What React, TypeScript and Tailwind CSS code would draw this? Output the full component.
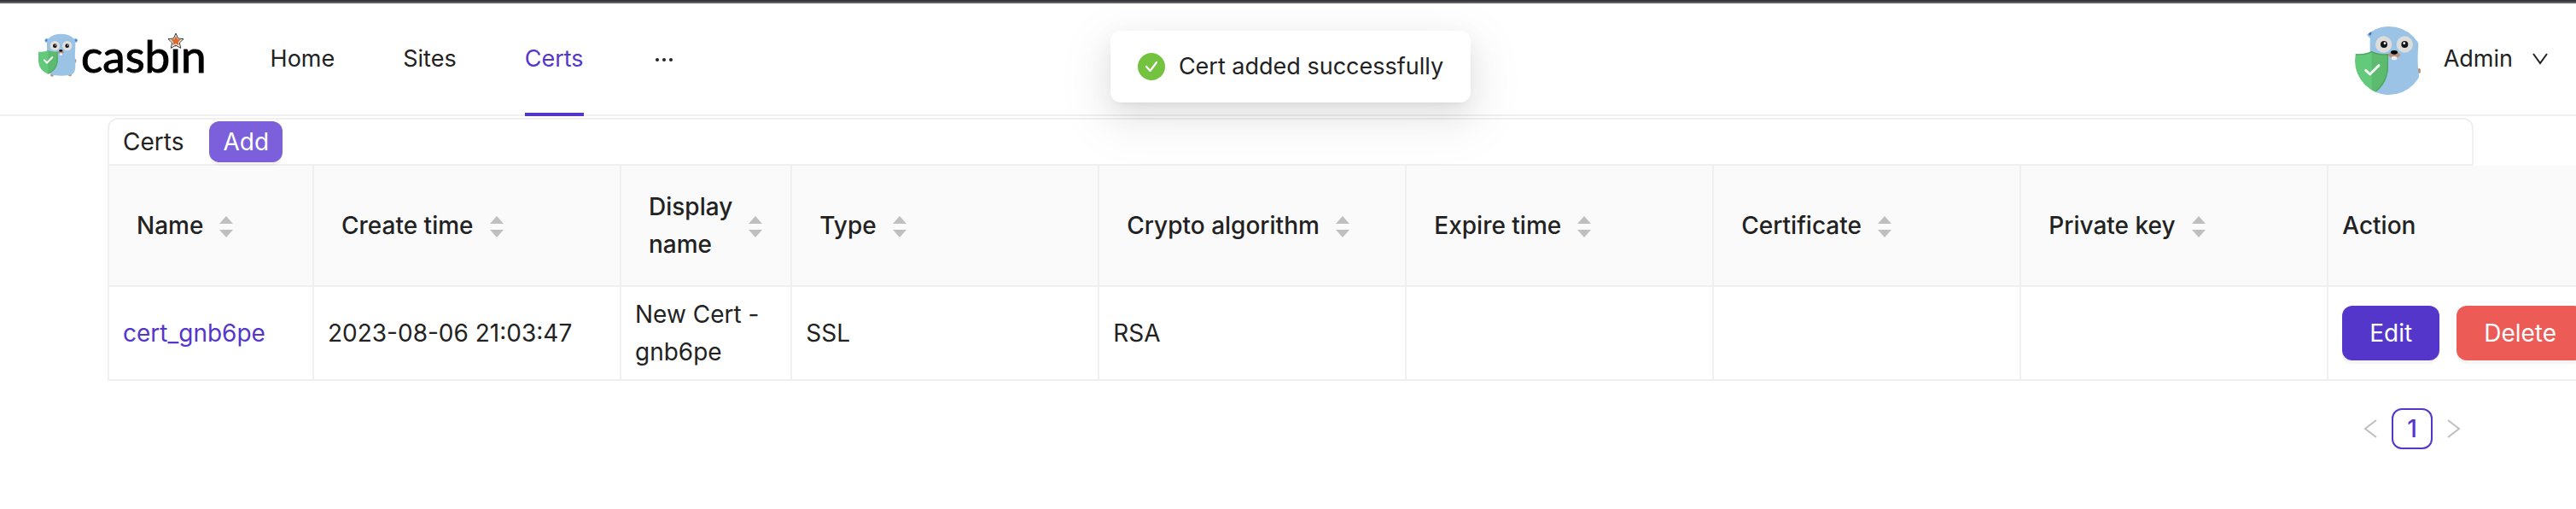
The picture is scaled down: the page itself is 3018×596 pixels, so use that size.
import React from "react";

const navItems = [
  { label: "Home", active: false },
  { label: "Sites", active: false },
  { label: "Certs", active: true },
];

const columns = [
  { title: "Name", width: "w-[240px]", sortable: true },
  { title: "Create time", width: "w-[360px]", sortable: true },
  { title: "Display name", width: "w-[200px]", sortable: true },
  { title: "Type", width: "w-[360px]", sortable: true },
  { title: "Crypto algorithm", width: "w-[360px]", sortable: true },
  { title: "Expire time", width: "w-[360px]", sortable: true },
  { title: "Certificate", width: "w-[360px]", sortable: true },
  { title: "Private key", width: "w-[360px]", sortable: true },
  { title: "Action", width: "w-[360px]", sortable: false },
];

const certs = [
  {
    name: "cert_gnb6pe",
    createdTime: "2023-08-06 21:03:47",
    displayName: "New Cert - gnb6pe",
    type: "SSL",
    cryptoAlgorithm: "RSA",
    expireTime: "",
    certificate: "",
    privateKey: "",
  },
];

function LogoGopher() {
  return (
    <svg viewBox="0 0 138 156" className="h-[52px] w-[46px]" aria-hidden="true">
      <ellipse cx="48" cy="147" rx="6" ry="5" fill="#b8917e" />
      <ellipse cx="111" cy="146" rx="6" ry="5" fill="#b8917e" />
      <ellipse cx="129" cy="97" rx="4" ry="7" fill="#b8917e" />
      <circle cx="30" cy="25" r="8" fill="#9ac3e6" />
      <circle cx="130" cy="25" r="8" fill="#9ac3e6" />
      <circle cx="28" cy="25" r="4" fill="#4a7fb5" />
      <circle cx="132" cy="25" r="4" fill="#4a7fb5" />
      <path
        d="M30 36C30 14 52 2 80 2s50 12 50 34c0 22-2 35-1 55 1 14 2 22 0 35-3 18-12 23-49 23-30 0-44-4-48-20-3-16-2-33-2-53z"
        fill="#9ac3e6"
      />
      <circle cx="58" cy="44" r="17" fill="#e2e0de" />
      <circle cx="101" cy="44" r="17" fill="#e2e0de" />
      <circle cx="58" cy="44" r="7" fill="#111" />
      <circle cx="101" cy="44" r="7" fill="#111" />
      <circle cx="60" cy="42" r="2" fill="#fff" />
      <circle cx="103" cy="42" r="2" fill="#fff" />
      <ellipse cx="79" cy="67" rx="11" ry="5" fill="#b8917e" />
      <rect x="74" y="70" width="10" height="7" rx="2" fill="#eee" />
      <ellipse cx="79" cy="61" rx="6" ry="4" fill="#111" />
      <path d="M0 65Q22 67 34 60Q46 67 68 65V98Q66 130 34 143Q2 130 0 98z" fill="#63ca7b" />
      <path d="M34 60Q46 67 68 65V98Q66 130 34 143z" fill="#5dbb6f" />
      <path d="M66 66V98Q64 129 34 141" fill="none" stroke="#4fa560" strokeWidth="3" />
      <path
        d="M21 94l9 10 19-20"
        fill="none"
        stroke="#fff"
        strokeWidth="6"
        strokeLinecap="round"
        strokeLinejoin="round"
      />
    </svg>
  );
}

function AvatarGopher() {
  return (
    <svg viewBox="27 21 240 240" className="mt-1 size-20 rounded-full" role="img" aria-label="Avatar">
      <path d="M66 48 Q72 40 90 34 L96 60 L80 62 Z" fill="#9ac3e6" />
      <path d="M74 48 Q80 40 86 42 L82 54 Z" fill="#4278b3" />
      <ellipse cx="252" cy="177" rx="6" ry="9" fill="#b8917e" />
      <path
        d="M80 75C80 35 110 5 165 5S252 50 250 90C247 125 247 150 250 180C256 215 255 270 220 270H110C70 270 78 200 80 170Z"
        fill="#9ac3e6"
      />
      <circle cx="128" cy="84" r="29" fill="#dcdcda" />
      <circle cx="202" cy="84" r="29" fill="#dcdcda" />
      <circle cx="129" cy="84" r="12" fill="#141414" />
      <circle cx="202" cy="84" r="12" fill="#141414" />
      <circle cx="132" cy="80" r="4" fill="#fff" />
      <circle cx="200" cy="80" r="4" fill="#fff" />
      <ellipse cx="165" cy="121" rx="21" ry="10" fill="#b8917e" />
      <rect x="155" y="126" width="20" height="13" rx="6" fill="#ececec" />
      <ellipse cx="165" cy="112" rx="12" ry="7" fill="#000" />
      <path d="M27 118Q64 121 86 109Q108 121 144 118V165Q141 218 104 248Q86 262 66 250Q30 218 27 165Z" fill="#63ca7b" />
      <path d="M86 109Q108 121 144 118V165Q141 218 104 248L86 258Z" fill="#5dbb6f" />
      <path d="M27 119Q64 122 86 110Q108 122 142 119V165Q139 217 102 247" fill="none" stroke="#4fa560" strokeWidth="4" />
      <path
        d="M65 175L80 189L111 158"
        fill="none"
        stroke="#f2f2f2"
        strokeWidth="9"
        strokeLinecap="round"
        strokeLinejoin="round"
      />
    </svg>
  );
}

function Star() {
  return (
    <svg viewBox="0 0 60 60" className="size-5" aria-hidden="true">
      <path
        d="M30 3L38 21L57 23L43 36L47 55L30 45L13 55L17 36L3 23L22 21Z"
        fill="#fff"
        stroke="#333"
        strokeWidth="3"
      />
      <path d="M30 12L36 24L48 25L39 34L41 46L30 40L19 46L21 34L12 25L24 24Z" fill="#e0692c" />
    </svg>
  );
}

function Logo() {
  return (
    <a href="#home" className="flex items-center gap-1 pb-2">
      <LogoGopher />
      <span className="relative font-['Lato',sans-serif] text-[53px] leading-[52px] text-black [-webkit-text-stroke:1px_#000]">
        casbin
        <span className="absolute -top-px left-[101px]">
          <Star />
        </span>
      </span>
    </a>
  );
}

function Chevron({ d, className }: { d: string; className: string }) {
  return (
    <svg viewBox="0 0 24 24" className={className} fill="none" stroke="currentColor" strokeWidth="2" aria-hidden="true">
      <path d={d} />
    </svg>
  );
}

function Header() {
  return (
    <header className="flex items-center justify-between border-b-2 border-[#f0f0f0] pr-[30px] pl-[45px]">
      <div className="flex items-center gap-[75px]">
        <Logo />
        <nav className="flex gap-20">
          {navItems.map((item) => (
            <a
              key={item.label}
              href={"#" + item.label.toLowerCase()}
              className={item.active ? "relative py-[43px] text-[#5436cb]" : "relative py-[43px]"}
            >
              {item.label}
              {item.active && <span className="absolute inset-x-0 -bottom-0.5 h-1 bg-[#5436cb]" />}
            </a>
          ))}
          <button type="button" aria-label="More" className="py-[43px]">
            <svg viewBox="0 0 28 28" className="size-7" fill="currentColor" aria-hidden="true">
              <circle cx="6" cy="15" r="2" />
              <circle cx="14" cy="15" r="2" />
              <circle cx="22" cy="15" r="2" />
            </svg>
          </button>
        </nav>
      </div>
      <button type="button" className="flex items-center gap-6">
        <AvatarGopher />
        <span className="flex items-center gap-5">
          Admin
          <Chevron d="M4 6L12 17L20 6" className="size-6" />
        </span>
      </button>
    </header>
  );
}

function Sorter() {
  return (
    <svg viewBox="0 0 18 30" className="mt-1 h-[30px] w-[18px] shrink-0" fill="#bfbfbf" aria-hidden="true">
      <path d="M9 2L17 11H1Z" />
      <path d="M1 18H17L9 27Z" />
    </svg>
  );
}

function CertTable() {
  return (
    <table className="w-max table-fixed border-separate border-spacing-0 border-l-2 border-[#f0f0f0] text-left">
      <thead className="bg-[#fafafa]">
        <tr>
          {columns.map((column) => (
            <th
              key={column.title}
              className={
                column.width + " border-r-2 border-b-2 border-[#f0f0f0] px-4 py-[26px] font-medium last:border-r-0"
              }
            >
              {column.sortable ? (
                <button type="button" className="flex items-center gap-[18px] px-4 text-left">
                  <span>{column.title}</span>
                  <Sorter />
                </button>
              ) : (
                column.title
              )}
            </th>
          ))}
        </tr>
      </thead>
      <tbody>
        {certs.map((cert) => (
          <tr
            key={cert.name}
            className="*:border-r-2 *:border-b-2 *:border-[#f0f0f0] *:px-4 *:py-[10px] *:last:border-r-0"
          >
            <td>
              <a href="#cert" className="text-[#5436cb]">
                {cert.name}
              </a>
            </td>
            <td>{cert.createdTime}</td>
            <td>{cert.displayName}</td>
            <td>{cert.type}</td>
            <td>{cert.cryptoAlgorithm}</td>
            <td>{cert.expireTime}</td>
            <td>{cert.certificate}</td>
            <td>{cert.privateKey}</td>
            <td>
              <div className="flex gap-5 text-white">
                <button
                  type="button"
                  className="rounded-xl bg-[#5436cb] px-8 py-[10px] shadow-[0_4px_0_rgba(0,0,0,0.04)]"
                >
                  Edit
                </button>
                <button
                  type="button"
                  className="rounded-xl bg-[#ec5b56] px-8 py-[10px] shadow-[0_4px_0_rgba(0,0,0,0.04)]"
                >
                  Delete
                </button>
              </div>
            </td>
          </tr>
        ))}
      </tbody>
    </table>
  );
}

function Pagination() {
  return (
    <nav aria-label="Pagination" className="mt-8 flex justify-end">
      <button type="button" aria-label="Previous page" disabled className="grid size-12 place-items-center text-[#bfbfbf]">
        <Chevron d="M18 2L5 12L18 22" className="size-6" />
      </button>
      <button
        type="button"
        aria-current="page"
        className="grid size-12 place-items-center rounded-xl border-2 border-[#5436cb] font-medium text-[#5436cb]"
      >
        1
      </button>
      <button type="button" aria-label="Next page" disabled className="grid size-12 place-items-center text-[#bfbfbf]">
        <Chevron d="M6 2L19 12L6 22" className="size-6" />
      </button>
    </nav>
  );
}

function Toast() {
  return (
    <div className="pointer-events-none absolute inset-x-0 top-[34px] flex justify-center pl-1.5">
      <div
        role="status"
        className="flex items-center gap-4 rounded-xl bg-white px-8 py-5 shadow-[0_12px_32px_0_rgba(0,0,0,0.08),0_6px_12px_-8px_rgba(0,0,0,0.12),0_18px_56px_16px_rgba(0,0,0,0.05)]"
      >
        <svg viewBox="0 0 32 32" className="size-8" aria-hidden="true">
          <circle cx="16" cy="16" r="16" fill="#73c240" />
          <path
            d="M10 16L14.500 21L22 11"
            fill="none"
            stroke="#fff"
            strokeWidth="2.200"
            strokeLinecap="round"
            strokeLinejoin="round"
          />
        </svg>
        <span>Cert added successfully</span>
      </div>
    </div>
  );
}

export default function App() {
  return (
    <div className="relative min-h-screen overflow-hidden border-t-2 border-[#36353b] bg-white font-['Inter',sans-serif] text-[27px] leading-[44px] text-[#222222]">
      <div className="border-t-2 border-[#616166]">
        <Header />
      </div>
      <main className="mt-0.5 pr-[120px] pl-[126px] text-[28px] leading-[44px]">
        <div className="flex items-center gap-[30px] rounded-t-xl border-2 border-[#f0f0f0] px-4 py-0.5">
          <h1>Certs</h1>
          <button
            type="button"
            className="rounded-xl bg-[#7b5fdb] px-4 py-0.5 text-white shadow-[0_4px_0_rgba(0,0,0,0.04)]"
          >
            Add
          </button>
        </div>
        <CertTable />
        <Pagination />
      </main>
      <Toast />
    </div>
  );
}
